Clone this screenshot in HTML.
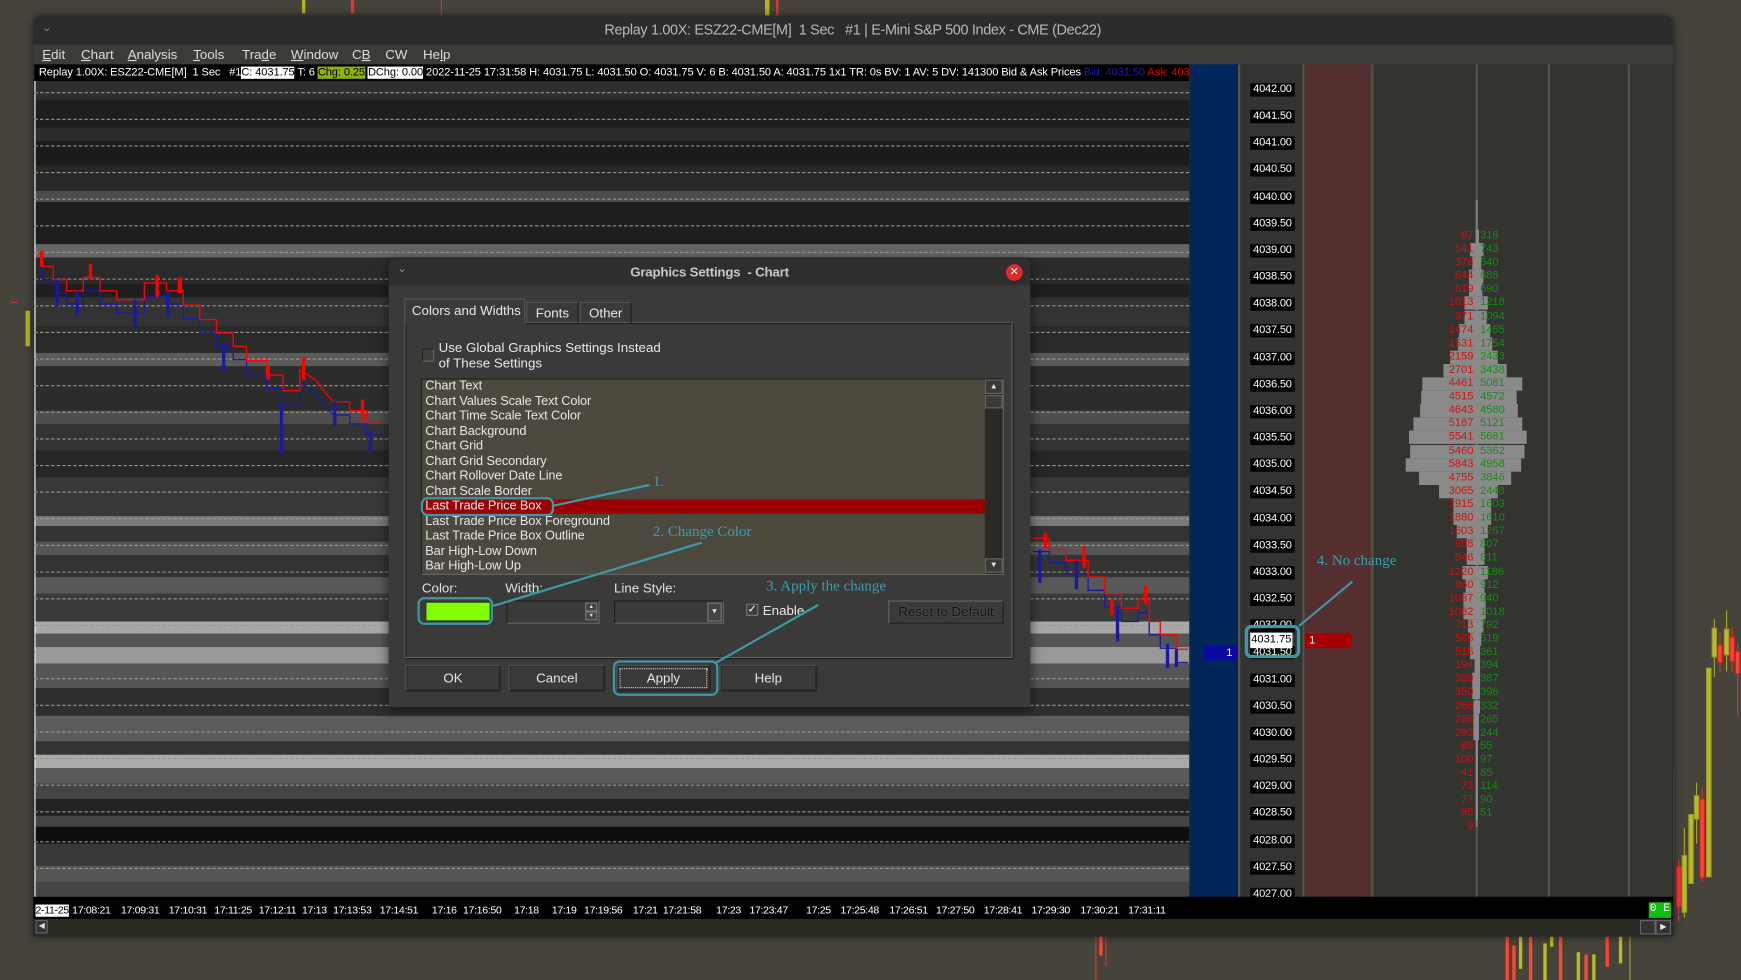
<!DOCTYPE html>
<html><head><meta charset="utf-8">
<style>
*{margin:0;padding:0;box-sizing:border-box}
html,body{width:1741px;height:980px;overflow:hidden;background:#46443a}
#s{position:absolute;left:0;top:0;width:1568px;height:883px;transform:scale(1.11033,1.10985);transform-origin:0 0;font-family:"Liberation Sans",sans-serif;background:#46443a;overflow:hidden}
.a{position:absolute}
.band{position:absolute;left:31px;width:1040px}
.dash{position:absolute;left:31px;width:1040px;height:0;border-top:1px dashed #9a9a88}
.pl{position:absolute;left:1126px;width:40px;height:12px;background:#000;color:#fff;font-size:10px;line-height:12px;text-align:center;letter-spacing:-.2px}
.v{position:absolute;left:1230px;width:200px;height:12px;font-size:10px;line-height:12px}
.v b{position:absolute;top:0;height:12px;background:#8a8a8a}
.v .r{position:absolute;right:103px;color:#d01010}
.v .g{position:absolute;left:103px;color:#109010}
.tl{position:absolute;top:815px;font-size:9.5px;color:#fff;letter-spacing:-.3px}
.menu span{position:absolute;top:42px;font-size:12px;color:#ddd}
.li{position:absolute;left:383px;font-size:11.5px;color:#e6e6e6;letter-spacing:-.1px}
.btn{position:absolute;top:599px;height:24px;border:1px solid #222;border-top-color:#555;border-left-color:#555;background:#3a3a3a;box-shadow:inset 0 0 0 1px #2a2a2a;color:#e8e8e8;font-size:12px;line-height:22px;text-align:center}
.ann{position:absolute;font-family:"Liberation Serif",serif;color:#3d9eb0;font-size:13.5px}
</style></head><body>
<div id="s">

<div class="a" style="left:272px;top:0;width:3px;height:12px;background:#b5b520"></div>
<div class="a" style="left:316px;top:0;width:3px;height:12px;background:#e33"></div>
<div class="a" style="left:689px;top:0;width:4px;height:14px;background:#b5b520"></div>
<div class="a" style="left:699px;top:0;width:2px;height:14px;background:#e33"></div>
<div class="a" style="left:397px;top:0;width:1px;height:14px;background:#c33"></div>
<div class="a" style="left:23px;top:280px;width:4px;height:32px;background:#b5b520"></div>
<div class="a" style="left:10px;top:272px;width:6px;height:1px;background:#d33"></div>

<svg class="a" style="left:1500px;top:550px" width="68" height="333" viewBox="1500 550 68 333">
<g stroke-width="1">
<line x1="1507" y1="693" x2="1507" y2="779" stroke="#e33"/>
<rect x="1510" y="781" width="4" height="36" fill="#f43" stroke="#c22"/>
<line x1="1512" y1="775" x2="1512" y2="830" stroke="#d33"/>
<line x1="1517" y1="746" x2="1517" y2="827" stroke="#aa2"/>
<rect x="1515" y="771" width="4" height="51" fill="#bb2" stroke="#993"/>
<rect x="1521" y="734" width="4" height="62" fill="#bb2" stroke="#993"/>
<line x1="1528" y1="705" x2="1528" y2="760" stroke="#aa2"/>
<rect x="1526" y="717" width="4" height="21" fill="#bb2" stroke="#993"/>
<line x1="1533" y1="710" x2="1533" y2="795" stroke="#d33"/>
<rect x="1531" y="720" width="4" height="71" fill="#f43" stroke="#c22"/>
<rect x="1537" y="602" width="4" height="188" fill="#bb2" stroke="#993"/>
<line x1="1544" y1="558" x2="1544" y2="610" stroke="#aa2"/>
<rect x="1542" y="566" width="4" height="26" fill="#bb2" stroke="#993"/>
<line x1="1549" y1="570" x2="1549" y2="605" stroke="#d33"/>
<rect x="1547" y="581" width="4" height="16" fill="#f43" stroke="#c22"/>
<line x1="1555" y1="540" x2="1555" y2="605" stroke="#aa2"/>
<rect x="1553" y="567" width="4" height="23" fill="#bb2" stroke="#993"/>
<line x1="1560" y1="565" x2="1560" y2="605" stroke="#d33"/>
<rect x="1558" y="574" width="4" height="22" fill="#f43" stroke="#c22"/>
<line x1="1565" y1="580" x2="1565" y2="645" stroke="#d33"/>
<rect x="1563" y="587" width="4" height="20" fill="#f43" stroke="#c22"/>
</g></svg>
<svg class="a" style="left:980px;top:840px" width="500" height="43" viewBox="980 840 500 43">
<line x1="987" y1="840" x2="987" y2="883" stroke="#e33"/><rect x="990" y="843" width="3" height="18" fill="#f43"/>
<line x1="996" y1="840" x2="996" y2="870" stroke="#d33"/>
<rect x="1356" y="843" width="3" height="40" fill="#f43"/><rect x="1362" y="852" width="3" height="31" fill="#f43"/>
<rect x="1368" y="843" width="3" height="30" fill="#bb2"/><rect x="1377" y="843" width="3" height="40" fill="#f43"/>
<rect x="1390" y="850" width="3" height="33" fill="#bb2"/><rect x="1396" y="843" width="3" height="10" fill="#bb2"/>
<rect x="1404" y="843" width="3" height="40" fill="#f43"/><rect x="1420" y="858" width="3" height="25" fill="#bb2"/>
<rect x="1427" y="860" width="3" height="23" fill="#f43"/><rect x="1434" y="860" width="3" height="23" fill="#bb2"/>
<rect x="1446" y="843" width="3" height="28" fill="#f43"/><rect x="1458" y="843" width="3" height="25" fill="#bb2"/>
<line x1="1468" y1="843" x2="1468" y2="883" stroke="#aa2"/>
</svg>

<div class="a" style="left:30px;top:14px;width:1477px;height:830px;background:#2b2b2b;border-radius:8px 8px 0 0;box-shadow:0 0 8px rgba(0,0,0,.5)"></div>
<div class="a" style="left:38px;top:20px;color:#888;font-size:10px">&#x2304;</div>
<div class="a" style="left:0;width:1536px;top:19px;text-align:center;color:#b8b8b8;font-size:13px;letter-spacing:-.3px">Replay 1.00X: ESZ22-CME[M]&nbsp; 1 Sec &nbsp; #1 | E-Mini S&amp;P 500 Index - CME (Dec22)</div>
<div class="a" style="left:30px;top:40px;width:1477px;height:18px;background:#3b3b37"></div>
<div class="menu">
<span style="left:38px"><u>E</u>dit</span><span style="left:73px"><u>C</u>hart</span><span style="left:115px"><u>A</u>nalysis</span><span style="left:174px"><u>T</u>ools</span><span style="left:218px">Tra<u>d</u>e</span><span style="left:262px"><u>W</u>indow</span><span style="left:317px">C<u>B</u></span><span style="left:347px">CW</span><span style="left:381px">He<u>l</u>p</span>
</div>

<div class="a" style="left:31px;top:58px;width:1040px;height:15px;background:#000;overflow:hidden;white-space:nowrap;font-size:10px;line-height:15px;color:#fff;letter-spacing:-.1px">
<span style="padding-left:4px">Replay 1.00X: ESZ22-CME[M]&nbsp; 1 Sec&nbsp;&nbsp; #1</span><span style="background:#fff;color:#000">C: 4031.75</span><span> T: 6 </span><span style="background:#8cb400;color:#000">Chg: 0.25</span> <span style="background:#fff;color:#000">DChg: 0.00</span><span> 2022-11-25 17:31:58 H: 4031.75 L: 4031.50 O: 4031.75 V: 6 B: 4031.50 A: 4031.75 1x1 TR: 0s BV: 1 AV: 5 DV: 141300 Bid &amp; Ask Prices </span><span style="color:#1a1aaa">Bid: 4031.50 </span><span style="color:#e00">Ask: 4031</span>
</div>

<div class="band" style="top:73px;height:735px;background:#262626"></div>
<div class="band" style="top:73px;height:17px;background:#2e2e2e"></div>
<div class="band" style="top:90px;height:25px;background:#1e1e1e"></div>
<div class="band" style="top:115px;height:12px;background:#2c2c2c"></div>
<div class="band" style="top:127px;height:22px;background:#1b1b1b"></div>
<div class="band" style="top:149px;height:23px;background:#282828"></div>
<div class="band" style="top:172px;height:10px;background:#4c4c4c"></div>
<div class="band" style="top:182px;height:38px;background:#1e1e1e"></div>
<div class="band" style="top:220px;height:12px;background:#666"></div>
<div class="band" style="top:232px;height:24px;background:#2a2a2a"></div>
<div class="band" style="top:256px;height:12px;background:#1e1e1e"></div>
<div class="band" style="top:268px;height:26px;background:#333"></div>
<div class="band" style="top:294px;height:24px;background:#2a2a2a"></div>
<div class="band" style="top:318px;height:12px;background:#5a5a5a"></div>
<div class="band" style="top:330px;height:40px;background:#2c2c2c"></div>
<div class="band" style="top:370px;height:12px;background:#4e4e4e"></div>
<div class="band" style="top:382px;height:24px;background:#333"></div>
<div class="band" style="top:406px;height:24px;background:#262626"></div>
<div class="band" style="top:430px;height:35px;background:#383838"></div>
<div class="band" style="top:465px;height:9px;background:#7a7a7a"></div>
<div class="band" style="top:474px;height:46px;background:#333"></div>
<div class="band" style="top:488px;height:12px;background:#555"></div>
<div class="band" style="top:520px;height:15px;background:#585858"></div>
<div class="band" style="top:535px;height:25px;background:#3a3a3a"></div>
<div class="band" style="top:560px;height:11px;background:#a8a8a8"></div>
<div class="band" style="top:571px;height:12px;background:#555"></div>
<div class="band" style="top:583px;height:15px;background:#999"></div>
<div class="band" style="top:598px;height:22px;background:#555"></div>
<div class="band" style="top:620px;height:25px;background:#2e2e2e"></div>
<div class="band" style="top:645px;height:23px;background:#5c5c5c"></div>
<div class="band" style="top:668px;height:12px;background:#333"></div>
<div class="band" style="top:680px;height:12px;background:#aaa"></div>
<div class="band" style="top:692px;height:14px;background:#5a5a5a"></div>
<div class="band" style="top:706px;height:14px;background:#444"></div>
<div class="band" style="top:720px;height:15px;background:#222"></div>
<div class="band" style="top:735px;height:10px;background:#444"></div>
<div class="band" style="top:745px;height:15px;background:#0e0e0e"></div>
<div class="band" style="top:760px;height:20px;background:#383838"></div>
<div class="band" style="top:780px;height:15px;background:#555"></div>
<div class="band" style="top:795px;height:13px;background:#444"></div>
<div class="a" style="left:31px;top:73px;width:1px;height:736px;background:#fff"></div>
<div class="dash" style="top:83px"></div><div class="dash" style="top:107px"></div><div class="dash" style="top:131px"></div><div class="dash" style="top:155px"></div><div class="dash" style="top:179px"></div><div class="dash" style="top:203px"></div><div class="dash" style="top:227px"></div><div class="dash" style="top:251px"></div><div class="dash" style="top:275px"></div><div class="dash" style="top:299px"></div><div class="dash" style="top:323px"></div><div class="dash" style="top:347px"></div><div class="dash" style="top:371px"></div><div class="dash" style="top:395px"></div><div class="dash" style="top:419px"></div><div class="dash" style="top:443px"></div><div class="dash" style="top:467px"></div><div class="dash" style="top:491px"></div><div class="dash" style="top:515px"></div><div class="dash" style="top:539px"></div><div class="dash" style="top:563px"></div><div class="dash" style="top:587px"></div><div class="dash" style="top:611px"></div><div class="dash" style="top:635px"></div><div class="dash" style="top:659px"></div><div class="dash" style="top:683px"></div><div class="dash" style="top:707px"></div><div class="dash" style="top:731px"></div><div class="dash" style="top:758px"></div><div class="dash" style="top:782px"></div>

<svg class="a" style="left:0;top:0" width="1100" height="820">
<g fill="none" stroke-width="1.2">
<polyline stroke="#1a1aa0" points="36,240 38,240 38,252 48,252 48,264 60,264 60,274 75,274 75,262 90,262 90,274 105,274 105,282 130,282 130,267 150,267 150,274 165,274 165,287 180,287 180,300 195,300 195,312 210,312 210,324 222,324 222,337 240,337 240,350 255,350 255,364 270,364 270,345 285,355 290,362 300,374 315,374 315,382 330,382 330,392 345,392"/>
<polyline stroke="#f00" points="36,228 38,228 38,240 48,240 48,252 60,252 60,262 75,262 75,250 90,250 90,262 105,262 105,270 130,270 130,255 150,255 150,262 165,262 165,275 180,275 180,288 195,288 195,300 210,300 210,312 222,312 222,325 240,325 240,338 255,338 255,352 270,352 270,333 285,343 290,350 300,362 315,362 315,370 330,370 330,380 345,380"/>
<polyline stroke="#1a1aa0" points="930,497 945,497 945,507 960,507 960,517 980,517 980,532 995,532 995,547 1010,547 1010,560 1025,560 1025,552 1035,552 1035,572 1045,572 1045,584 1060,584 1060,597 1070,597"/>
<polyline stroke="#f00" points="930,485 945,485 945,495 960,495 960,505 980,505 980,520 995,520 995,535 1010,535 1010,548 1025,548 1025,540 1035,540 1035,560 1045,560 1045,572 1060,572 1060,585 1070,585"/>
</g>
<g fill="#f00">
<rect x="36" y="226" width="3" height="14"/><rect x="80" y="238" width="3" height="14"/><rect x="140" y="248" width="3" height="20"/><rect x="160" y="250" width="4" height="14"/><rect x="240" y="330" width="3" height="12"/><rect x="272" y="322" width="3" height="20"/><rect x="325" y="360" width="3" height="20"/>
<rect x="940" y="480" width="3" height="14"/><rect x="975" y="492" width="3" height="20"/><rect x="1000" y="540" width="3" height="14"/><rect x="1030" y="528" width="3" height="16"/>
</g>
<g fill="#1a1aa0">
<rect x="50" y="252" width="3" height="24"/><rect x="68" y="262" width="3" height="22"/><rect x="120" y="270" width="3" height="26"/><rect x="150" y="262" width="3" height="24"/><rect x="200" y="310" width="3" height="24"/><rect x="252" y="364" width="3" height="44"/><rect x="300" y="362" width="3" height="22"/><rect x="332" y="388" width="3" height="20"/>
<rect x="935" y="495" width="3" height="30"/><rect x="968" y="505" width="3" height="26"/><rect x="1005" y="548" width="3" height="30"/><rect x="1050" y="580" width="3" height="22"/><rect x="1058" y="585" width="3" height="16"/>
</g>
</svg>

<div class="a" style="left:1072px;top:58px;width:44px;height:750px;background:#00265a"></div>
<div class="a" style="left:1116px;top:58px;width:58px;height:750px;background:#333331"></div>
<div class="a" style="left:1115px;top:58px;width:2px;height:750px;background:#555548"></div>
<div class="a" style="left:1173px;top:58px;width:2px;height:750px;background:#555548"></div>
<div class="a" style="left:1175px;top:58px;width:60px;height:750px;background:#552e30"></div>
<div class="a" style="left:1235px;top:58px;width:233px;height:750px;background:#333330"></div>
<div class="a" style="left:1468px;top:58px;width:38px;height:750px;background:#363632"></div>
<div class="a" style="left:1235px;top:58px;width:2px;height:750px;background:#555548"></div>
<div class="a" style="left:1329px;top:58px;width:2px;height:750px;background:#555548"></div>
<div class="a" style="left:1394px;top:58px;width:2px;height:750px;background:#555548"></div>
<div class="a" style="left:1466px;top:58px;width:2px;height:750px;background:#555548"></div>

<div class="pl" style="top:75px">4042.00</div><div class="pl" style="top:99px">4041.50</div><div class="pl" style="top:123px">4041.00</div><div class="pl" style="top:147px">4040.50</div><div class="pl" style="top:172px">4040.00</div><div class="pl" style="top:196px">4039.50</div><div class="pl" style="top:220px">4039.00</div><div class="pl" style="top:244px">4038.50</div><div class="pl" style="top:268px">4038.00</div><div class="pl" style="top:292px">4037.50</div><div class="pl" style="top:317px">4037.00</div><div class="pl" style="top:341px">4036.50</div><div class="pl" style="top:365px">4036.00</div><div class="pl" style="top:389px">4035.50</div><div class="pl" style="top:413px">4035.00</div><div class="pl" style="top:437px">4034.50</div><div class="pl" style="top:462px">4034.00</div><div class="pl" style="top:486px">4033.50</div><div class="pl" style="top:510px">4033.00</div><div class="pl" style="top:534px">4032.50</div><div class="pl" style="top:558px">4032.00</div><div class="pl" style="top:582px">4031.50</div><div class="pl" style="top:607px">4031.00</div><div class="pl" style="top:631px">4030.50</div><div class="pl" style="top:655px">4030.00</div><div class="pl" style="top:679px">4029.50</div><div class="pl" style="top:703px">4029.00</div><div class="pl" style="top:727px">4028.50</div><div class="pl" style="top:752px">4028.00</div><div class="pl" style="top:776px">4027.50</div><div class="pl" style="top:800px">4027.00</div>
<div class="a" style="left:1126px;top:570px;width:38px;height:14px;background:#fff;color:#000;font-size:10px;line-height:14px;text-align:center">4031.75</div>
<div class="a" style="left:1121px;top:563px;width:50px;height:30px;border:3px solid #3a9aaa;border-radius:6px"></div>
<div class="a" style="left:1084px;top:582px;width:30px;height:13px;background:#0a0aa0;color:#fff;font-size:10px;line-height:13px;text-align:right;padding-right:4px">1</div>
<div class="a" style="left:1175px;top:571px;width:42px;height:13px;background:#a80000;color:#fff;font-size:10px;line-height:13px;padding-left:4px">1</div>

<div class="a" style="left:1329px;top:180px;width:2px;height:565px;background:#7a7a70"></div>
<div class="v" style="top:207px"><b style="left:99px;width:3px"></b><span class="r">67</span><span class="g">318</span></div>
<div class="v" style="top:219px"><b style="left:94px;width:12px"></b><span class="r">541</span><span class="g">743</span></div>
<div class="v" style="top:231px"><b style="left:96px;width:8px"></b><span class="r">376</span><span class="g">540</span></div>
<div class="v" style="top:243px"><b style="left:93px;width:13px"></b><span class="r">644</span><span class="g">688</span></div>
<div class="v" style="top:255px"><b style="left:93px;width:12px"></b><span class="r">619</span><span class="g">690</span></div>
<div class="v" style="top:267px"><b style="left:89px;width:21px"></b><span class="r">1013</span><span class="g">1218</span></div>
<div class="v" style="top:280px"><b style="left:89px;width:20px"></b><span class="r">971</span><span class="g">1094</span></div>
<div class="v" style="top:292px"><b style="left:84px;width:28px"></b><span class="r">1474</span><span class="g">1455</span></div>
<div class="v" style="top:304px"><b style="left:83px;width:31px"></b><span class="r">1531</span><span class="g">1754</span></div>
<div class="v" style="top:316px"><b style="left:76px;width:43px"></b><span class="r">2159</span><span class="g">2433</span></div>
<div class="v" style="top:328px"><b style="left:70px;width:57px"></b><span class="r">2701</span><span class="g">3438</span></div>
<div class="v" style="top:340px"><b style="left:51px;width:90px"></b><span class="r">4461</span><span class="g">5081</span></div>
<div class="v" style="top:352px"><b style="left:50px;width:86px"></b><span class="r">4515</span><span class="g">4572</span></div>
<div class="v" style="top:364px"><b style="left:49px;width:88px"></b><span class="r">4643</span><span class="g">4580</span></div>
<div class="v" style="top:376px"><b style="left:43px;width:98px"></b><span class="r">5187</span><span class="g">5121</span></div>
<div class="v" style="top:388px"><b style="left:39px;width:106px"></b><span class="r">5541</span><span class="g">5681</span></div>
<div class="v" style="top:401px"><b style="left:40px;width:103px"></b><span class="r">5460</span><span class="g">5362</span></div>
<div class="v" style="top:413px"><b style="left:36px;width:104px"></b><span class="r">5843</span><span class="g">4958</span></div>
<div class="v" style="top:425px"><b style="left:48px;width:83px"></b><span class="r">4755</span><span class="g">3846</span></div>
<div class="v" style="top:437px"><b style="left:66px;width:53px"></b><span class="r">3065</span><span class="g">2448</span></div>
<div class="v" style="top:449px"><b style="left:79px;width:34px"></b><span class="r">1915</span><span class="g">1603</span></div>
<div class="v" style="top:461px"><b style="left:79px;width:34px"></b><span class="r">1880</span><span class="g">1610</span></div>
<div class="v" style="top:473px"><b style="left:82px;width:28px"></b><span class="r">1603</span><span class="g">1267</span></div>
<div class="v" style="top:485px"><b style="left:91px;width:16px"></b><span class="r">858</span><span class="g">807</span></div>
<div class="v" style="top:497px"><b style="left:91px;width:16px"></b><span class="r">846</span><span class="g">811</span></div>
<div class="v" style="top:510px"><b style="left:87px;width:23px"></b><span class="r">1220</span><span class="g">1186</span></div>
<div class="v" style="top:522px"><b style="left:90px;width:17px"></b><span class="r">860</span><span class="g">912</span></div>
<div class="v" style="top:534px"><b style="left:88px;width:20px"></b><span class="r">1087</span><span class="g">940</span></div>
<div class="v" style="top:546px"><b style="left:88px;width:20px"></b><span class="r">1082</span><span class="g">1018</span></div>
<div class="v" style="top:558px"><b style="left:92px;width:14px"></b><span class="r">713</span><span class="g">792</span></div>
<div class="v" style="top:570px"><b style="left:94px;width:10px"></b><span class="r">565</span><span class="g">519</span></div>
<div class="v" style="top:582px"><b style="left:94px;width:9px"></b><span class="r">515</span><span class="g">361</span></div>
<div class="v" style="top:594px"><b style="left:98px;width:5px"></b><span class="r">194</span><span class="g">394</span></div>
<div class="v" style="top:606px"><b style="left:96px;width:7px"></b><span class="r">389</span><span class="g">387</span></div>
<div class="v" style="top:618px"><b style="left:96px;width:7px"></b><span class="r">350</span><span class="g">396</span></div>
<div class="v" style="top:631px"><b style="left:97px;width:6px"></b><span class="r">266</span><span class="g">332</span></div>
<div class="v" style="top:643px"><b style="left:97px;width:5px"></b><span class="r">288</span><span class="g">265</span></div>
<div class="v" style="top:655px"><b style="left:97px;width:5px"></b><span class="r">293</span><span class="g">244</span></div>
<div class="v" style="top:667px"><b style="left:99px;width:2px"></b><span class="r">69</span><span class="g">55</span></div>
<div class="v" style="top:679px"><b style="left:99px;width:2px"></b><span class="r">100</span><span class="g">97</span></div>
<div class="v" style="top:691px"><b style="left:99px;width:2px"></b><span class="r">41</span><span class="g">85</span></div>
<div class="v" style="top:703px"><b style="left:99px;width:2px"></b><span class="r">73</span><span class="g">114</span></div>
<div class="v" style="top:715px"><b style="left:99px;width:2px"></b><span class="r">77</span><span class="g">90</span></div>
<div class="v" style="top:727px"><b style="left:99px;width:2px"></b><span class="r">85</span><span class="g">51</span></div>
<div class="v" style="top:739px"><span class="r">9</span></div>

<div class="a" style="left:30px;top:808px;width:1477px;height:20px;background:#000"></div>
<div class="tl" style="left:32px;background:#fff;color:#000">2-11-25</div>
<div class="tl" style="left:65px">17:08:21</div><div class="tl" style="left:109px">17:09:31</div><div class="tl" style="left:152px">17:10:31</div><div class="tl" style="left:193px">17:11:25</div><div class="tl" style="left:233px">17:12:11</div><div class="tl" style="left:272px">17:13</div><div class="tl" style="left:300px">17:13:53</div><div class="tl" style="left:342px">17:14:51</div><div class="tl" style="left:389px">17:16</div><div class="tl" style="left:417px">17:16:50</div><div class="tl" style="left:463px">17:18</div><div class="tl" style="left:497px">17:19</div><div class="tl" style="left:526px">17:19:56</div><div class="tl" style="left:570px">17:21</div><div class="tl" style="left:597px">17:21:58</div><div class="tl" style="left:645px">17:23</div><div class="tl" style="left:675px">17:23:47</div><div class="tl" style="left:726px">17:25</div><div class="tl" style="left:757px">17:25:48</div><div class="tl" style="left:801px">17:26:51</div><div class="tl" style="left:843px">17:27:50</div><div class="tl" style="left:886px">17:28:41</div><div class="tl" style="left:929px">17:29:30</div><div class="tl" style="left:973px">17:30:21</div><div class="tl" style="left:1016px">17:31:11</div>
<div class="a" style="left:1485px;top:813px;width:20px;height:14px;background:#10c010;color:#fff;font-size:10px;line-height:14px;text-align:center;font-family:'Liberation Mono',monospace">0 E</div>
<div class="a" style="left:30px;top:828px;width:1477px;height:15px;background:#2a2a24"></div>
<div class="a" style="left:32px;top:829px;width:11px;height:12px;background:#333;border:1px solid #666;color:#ddd;font-size:7px;line-height:10px;text-align:center">&#9664;</div>
<div class="a" style="left:1477px;top:829px;width:14px;height:13px;background:#333;border:1px solid #666"></div>
<div class="a" style="left:1491px;top:829px;width:14px;height:13px;background:#333;border:1px solid #666;color:#eee;font-size:7px;line-height:11px;text-align:center">&#9654;</div>

<div class="a" style="left:350px;top:233px;width:578px;height:404px;background:#3a3a38;border-radius:6px 6px 0 0;box-shadow:0 2px 10px rgba(0,0,0,.6)"></div>
<div class="a" style="left:350px;top:233px;width:578px;height:24px;background:#2e2e2d;border-radius:6px 6px 0 0"></div>
<div class="a" style="left:358px;top:237px;color:#999;font-size:10px">&#x2304;</div>
<div class="a" style="left:350px;width:578px;top:238px;text-align:center;color:#c8c8c8;font-size:12px;font-weight:bold;letter-spacing:-.2px">Graphics Settings&nbsp; - Chart</div>
<div class="a" style="left:906px;top:238px;width:15px;height:15px;border-radius:50%;background:#e02a2a;color:#fff;font-size:10px;line-height:15px;text-align:center">&#x2715;</div>

<div class="a" style="left:364px;top:290px;width:549px;height:304px;border:1px solid #1e1e1e;border-top-color:#555;border-left-color:#555;box-shadow:inset -1px -1px 0 #666,inset 1px 1px 0 #222"></div>
<div class="a" style="left:364px;top:269px;width:109px;height:23px;background:#3a3a38;border:1px solid #555;border-bottom:none;color:#e8e8e8;font-size:12px;line-height:20px;padding-left:6px">Colors and Widths</div>
<div class="a" style="left:474px;top:272px;width:47px;height:19px;border:1px solid #555;border-bottom:none;border-right-color:#222;color:#e8e8e8;font-size:12px;line-height:18px;text-align:center">Fonts</div>
<div class="a" style="left:522px;top:272px;width:47px;height:19px;border:1px solid #555;border-bottom:none;border-right-color:#222;color:#e8e8e8;font-size:12px;line-height:18px;text-align:center">Other</div>

<div class="a" style="left:380px;top:314px;width:11px;height:12px;background:#3e3e3a;border:1px solid #222;border-right-color:#666;border-bottom-color:#666"></div>
<div class="a" style="left:395px;top:307px;color:#e8e8e8;font-size:12px;line-height:13.5px">Use Global Graphics Settings Instead<br>of These Settings</div>

<div class="a" style="left:379px;top:341px;width:525px;height:177px;background:#4b493e;border:1px solid #1e1e1e;border-right-color:#666;border-bottom-color:#666;overflow:hidden"></div>
<div class="a" style="left:380px;top:450px;width:507px;height:13px;background:#9a0000"></div>
<div class="li" style="top:342px">Chart Text</div>
<div class="li" style="top:355.5px">Chart Values Scale Text Color</div>
<div class="li" style="top:369px">Chart Time Scale Text Color</div>
<div class="li" style="top:382.5px">Chart Background</div>
<div class="li" style="top:396px">Chart Grid</div>
<div class="li" style="top:409.5px">Chart Grid Secondary</div>
<div class="li" style="top:423px">Chart Rollover Date Line</div>
<div class="li" style="top:436.5px">Chart Scale Border</div>
<div class="li" style="top:450px">Last Trade Price Box</div>
<div class="li" style="top:463.5px">Last Trade Price Box Foreground</div>
<div class="li" style="top:477px">Last Trade Price Box Outline</div>
<div class="li" style="top:490.5px">Bar High-Low Down</div>
<div class="li" style="top:504px;height:13px;overflow:hidden">Bar High-Low Up</div>
<div class="a" style="left:887px;top:342px;width:16px;height:175px;background:#2a2a22"></div>
<div class="a" style="left:887px;top:342px;width:16px;height:13px;background:#3a3a36;border:1px solid #666;color:#eee;font-size:7px;line-height:11px;text-align:center">&#9650;</div>
<div class="a" style="left:887px;top:356px;width:16px;height:12px;background:#3a3a36;border:1px solid #666"></div>
<div class="a" style="left:887px;top:503px;width:16px;height:13px;background:#3a3a36;border:1px solid #666;color:#eee;font-size:7px;line-height:11px;text-align:center">&#9660;</div>

<div class="a" style="left:380px;top:523px;color:#e0e0e0;font-size:12px">Color:</div>
<div class="a" style="left:455px;top:523px;color:#e0e0e0;font-size:12px">Width:</div>
<div class="a" style="left:553px;top:523px;color:#e0e0e0;font-size:12px">Line Style:</div>
<div class="a" style="left:383px;top:542px;width:59px;height:18px;background:#80ff00;border:1px solid #222"></div>
<div class="a" style="left:456px;top:541px;width:84px;height:21px;background:#3a3a38;border:1px solid #222;border-right-color:#666;border-bottom-color:#666"></div>
<div class="a" style="left:527px;top:543px;width:11px;height:8px;background:#444;border:1px solid #777;color:#ddd;font-size:5px;line-height:6px;text-align:center">&#9650;</div>
<div class="a" style="left:527px;top:551px;width:11px;height:8px;background:#444;border:1px solid #777;color:#ddd;font-size:5px;line-height:6px;text-align:center">&#9660;</div>
<div class="a" style="left:553px;top:541px;width:99px;height:21px;background:#3a3a38;border:1px solid #222;border-right-color:#666;border-bottom-color:#666"></div>
<div class="a" style="left:637px;top:543px;width:13px;height:17px;background:#444;border:1px solid #777;color:#ddd;font-size:7px;line-height:15px;text-align:center">&#9660;</div>
<div class="a" style="left:672px;top:544px;width:11px;height:11px;background:#3e3e3a;border:1px solid #777;color:#fff;font-size:10px;line-height:9px;text-align:center">&#10003;</div>
<div class="a" style="left:687px;top:543px;color:#e8e8e8;font-size:12px">Enable</div>
<div class="a" style="left:800px;top:541px;width:104px;height:21px;background:#3a3a38;border:1px solid #222;border-top-color:#666;border-left-color:#666;color:#111;font-size:12px;line-height:19px;text-align:center;text-shadow:0 0 1px #777">Reset to Default</div>

<div class="btn" style="left:365px;width:86px">OK</div>
<div class="btn" style="left:458px;width:87px">Cancel</div>
<div class="btn" style="left:555px;width:85px;outline:1px dotted #ccc;outline-offset:-4px">Apply</div>
<div class="btn" style="left:648px;width:88px">Help</div>

<div class="a" style="left:379px;top:448px;width:120px;height:17px;border:2px solid #3a9aaa;border-radius:6px"></div>
<div class="a" style="left:376px;top:538px;width:68px;height:25px;border:2px solid #3a9aaa;border-radius:6px"></div>
<div class="a" style="left:552px;top:595px;width:95px;height:32px;border:2px solid #3a9aaa;border-radius:6px"></div>
<svg class="a" style="left:0;top:0" width="1568" height="883">
<g stroke="#3a9aaa" stroke-width="2" fill="none">
<line x1="497" y1="456" x2="585" y2="437"/>
<line x1="444" y1="546" x2="632" y2="489"/>
<line x1="645" y1="597" x2="737" y2="545"/>
<line x1="1170" y1="564" x2="1218" y2="524"/>
</g></svg>
<div class="ann" style="left:588px;top:426px">1.</div>
<div class="ann" style="left:588px;top:471px">2. Change Color</div>
<div class="ann" style="left:690px;top:520px">3. Apply the change</div>
<div class="ann" style="left:1186px;top:497px">4. No change</div>

</div>
</body></html>
